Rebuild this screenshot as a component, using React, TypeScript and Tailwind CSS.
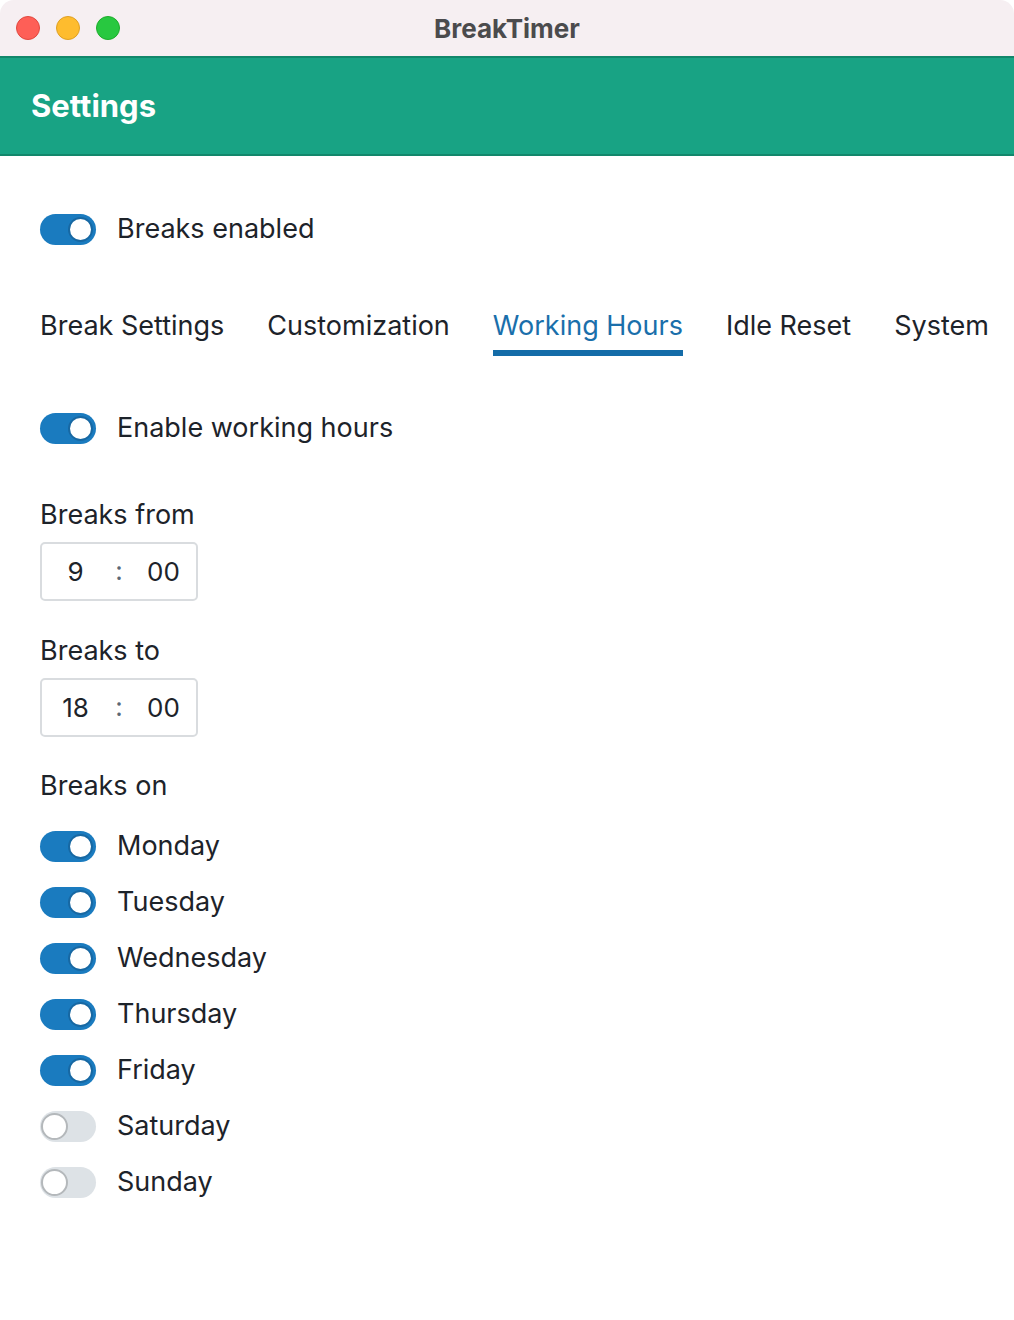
import React from 'react';

const font = { fontFamily: 'Inter, "Noto Sans", sans-serif' };

const Toggle: React.FC<{ on: boolean }> = ({ on }) => (
    on ? (
        <div className="relative w-[56px] h-[31px] rounded-full bg-[#1a7bbf] shrink-0">
            <div className="absolute right-[3px] top-[3px] w-[25px] h-[25px] rounded-full bg-white border-[2px] border-[#1768a3]"></div>
        </div>
    ) : (
        <div className="relative w-[56px] h-[31px] rounded-full bg-[#dde2e6] shrink-0">
            <div className="absolute left-[1px] top-[2px] w-[27px] h-[27px] rounded-full bg-white border-[2px] border-[#b4b8bb]"></div>
        </div>
    )
);

const Row: React.FC<{ on: boolean; label: string }> = ({ on, label }) => (
    <div className="flex items-center gap-[21px] h-[56px]">
        <Toggle on={on} />
        <span className="text-[27px] text-[#1d232a] whitespace-nowrap">{label}</span>
    </div>
);

const TimeBox: React.FC<{ h: string; m: string }> = ({ h, m }) => (
    <div className="flex items-center w-[158px] h-[59px] rounded-[5px] border-[2px] border-[#d9dcdf] text-[26px] text-[#1d232a]">
        <span className="w-[68px] text-center">{h}</span>
        <span className="w-[20px] text-center text-[#5b6875] -mt-[2px]">:</span>
        <span className="w-[68px] text-center pl-[2px]">{m}</span>
    </div>
);

const tabs = ['Break Settings', 'Customization', 'Working Hours', 'Idle Reset', 'System'];
const days: [string, boolean][] = [
    ['Monday', true], ['Tuesday', true], ['Wednesday', true], ['Thursday', true],
    ['Friday', true], ['Saturday', false], ['Sunday', false],
];

const App: React.FC = () => {
    return (
        <div className="w-[1014px] h-[1320px] bg-white overflow-hidden" style={font}>
            <div className="w-full h-full rounded-[14px] overflow-hidden bg-white flex flex-col">
                {/* title bar */}
                <div className="relative h-[56px] bg-[#f6eff2] flex items-center justify-center shrink-0">
                    <div className="absolute left-[16px] top-[16px] flex gap-[16px]">
                        <div className="w-[24px] h-[24px] rounded-full bg-[#fe5f57] border border-[#e1483f]"></div>
                        <div className="w-[24px] h-[24px] rounded-full bg-[#febc2e] border border-[#dfa023]"></div>
                        <div className="w-[24px] h-[24px] rounded-full bg-[#28c840] border border-[#1dad2b]"></div>
                    </div>
                    <span className="text-[26px] font-bold text-[#4b4b4d]">BreakTimer</span>
                </div>
                {/* header */}
                <div className="h-[100px] bg-[#18a384] border-t-[2px] border-b-[2px] border-[#12876b] flex items-center px-[31px] shrink-0">
                    <h1 className="text-[31px] font-bold text-white">Settings</h1>
                </div>
                <div className="px-[40px] flex flex-col">
                    <div className="mt-[45px]">
                        <Row on={true} label="Breaks enabled" />
                    </div>
                    <div className="flex gap-[43px] mt-[49px] h-[58px]">
                        {tabs.map(t => (
                            <div key={t} className="relative shrink-0">
                                <span className={`text-[27px] whitespace-nowrap ${t === 'Working Hours' ? 'text-[#1a6fab]' : 'text-[#1d232a]'}`}>{t}</span>
                                {t === 'Working Hours' && <div className="absolute left-0 right-0 top-[44px] h-[6px] bg-[#146ca8]"></div>}
                            </div>
                        ))}
                    </div>
                    <div className="mt-[36px]">
                        <Row on={true} label="Enable working hours" />
                    </div>
                    <div className="mt-[42px] text-[27px] text-[#1d232a] leading-[34px]">Breaks from</div>
                    <div className="mt-[10px]"><TimeBox h="9" m="00" /></div>
                    <div className="mt-[33px] text-[27px] text-[#1d232a] leading-[34px]">Breaks to</div>
                    <div className="mt-[10px]"><TimeBox h="18" m="00" /></div>
                    <div className="mt-[32px] text-[27px] text-[#1d232a] leading-[34px]">Breaks on</div>
                    <div className="mt-[15px] flex flex-col">
                        {days.map(([d, on]) => <Row key={d} on={on} label={d} />)}
                    </div>
                </div>
            </div>
        </div>
    );
};

export default App;
